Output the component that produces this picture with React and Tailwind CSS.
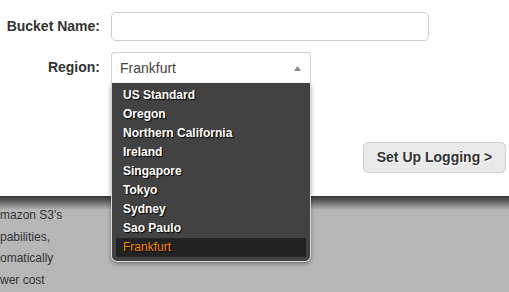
import { useState } from "react"

const regions = [
  "US Standard",
  "Oregon",
  "Northern California",
  "Ireland",
  "Singapore",
  "Tokyo",
  "Sydney",
  "Sao Paulo",
  "Frankfurt"
]

const backdropLines = ["mazon S3's", "pabilities,", "omatically", "wer cost"]

export default function App() {
  const [bucketName, setBucketName] = useState("")
  const [region, setRegion] = useState("Frankfurt")

  return (
    <div className="relative w-[509px] h-[292px] overflow-hidden bg-[#b7b7b7] font-['Liberation_Sans',Arial,sans-serif] text-[#333]">
      <div className="h-[196px] bg-white pt-[12px]">
        <div className="grid grid-cols-[100px_auto] gap-x-[11px] gap-y-[11px] items-center">
          <label className="text-right text-[14px] font-bold text-[#333]">
            Bucket Name:
          </label>
          <input
            value={bucketName}
            onChange={(event) => setBucketName(event.target.value)}
            className="w-[318px] h-[29px] rounded-[5px] border border-[#cccccc] px-2 text-[14px] outline-none"
          />

          <label className="text-right text-[14px] font-bold text-[#333]">
            Region:
          </label>
          <div className="relative w-[200px]">
            <div className="flex items-center justify-between h-[31px] rounded-t-[4px] border border-b-0 border-[#d0d0d0] bg-white pl-[8px] pr-[9px]">
              <span className="text-[14px] text-[#444]">{region}</span>
              <svg width="7" height="5" viewBox="0 0 7 5">
                <path d="M3.5 0 L7 5 L0 5 Z" fill="#8a8a8a" />
              </svg>
            </div>

            <ul className="absolute left-0 top-[31px] z-10 w-[200px] rounded-b-[6px] border border-t-0 border-[#d8d8d8] bg-[#424242] px-[4px] pt-[3px] pb-[4px] shadow-[0_2px_4px_rgba(0,0,0,0.35)]">
              {regions.map((name) => (
                <li
                  key={name}
                  onClick={() => setRegion(name)}
                  className={
                    name === region
                      ? "h-[19px] leading-[19px] px-[7px] bg-[#222222] text-[12px] text-[#ff8a00] [text-shadow:1px_1px_1px_#000]"
                      : "h-[19px] leading-[19px] px-[7px] text-[12px] font-bold text-white [text-shadow:1px_1px_1px_#000]"
                  }
                >
                  {name}
                </li>
              ))}
            </ul>
          </div>
        </div>

        <div className="flex justify-end pr-[3px] mt-[59px]">
          <button className="w-[143px] h-[31px] rounded-[5px] border border-[#cfcfcf] bg-[#e9e9e9] text-[14px] font-bold text-[#333] [text-shadow:1px_1px_0_#fff]">
            Set Up Logging &gt;
          </button>
        </div>
      </div>

      <div className="absolute left-0 right-0 top-[196px] h-[14px] bg-gradient-to-b from-[#333333] to-[#b7b7b7]" />

      <div className="pt-[9px] text-[12px] leading-[21.7px] text-[#333]">
        {backdropLines.map((line) => (
          <p key={line}>{line}</p>
        ))}
      </div>
    </div>
  )
}
